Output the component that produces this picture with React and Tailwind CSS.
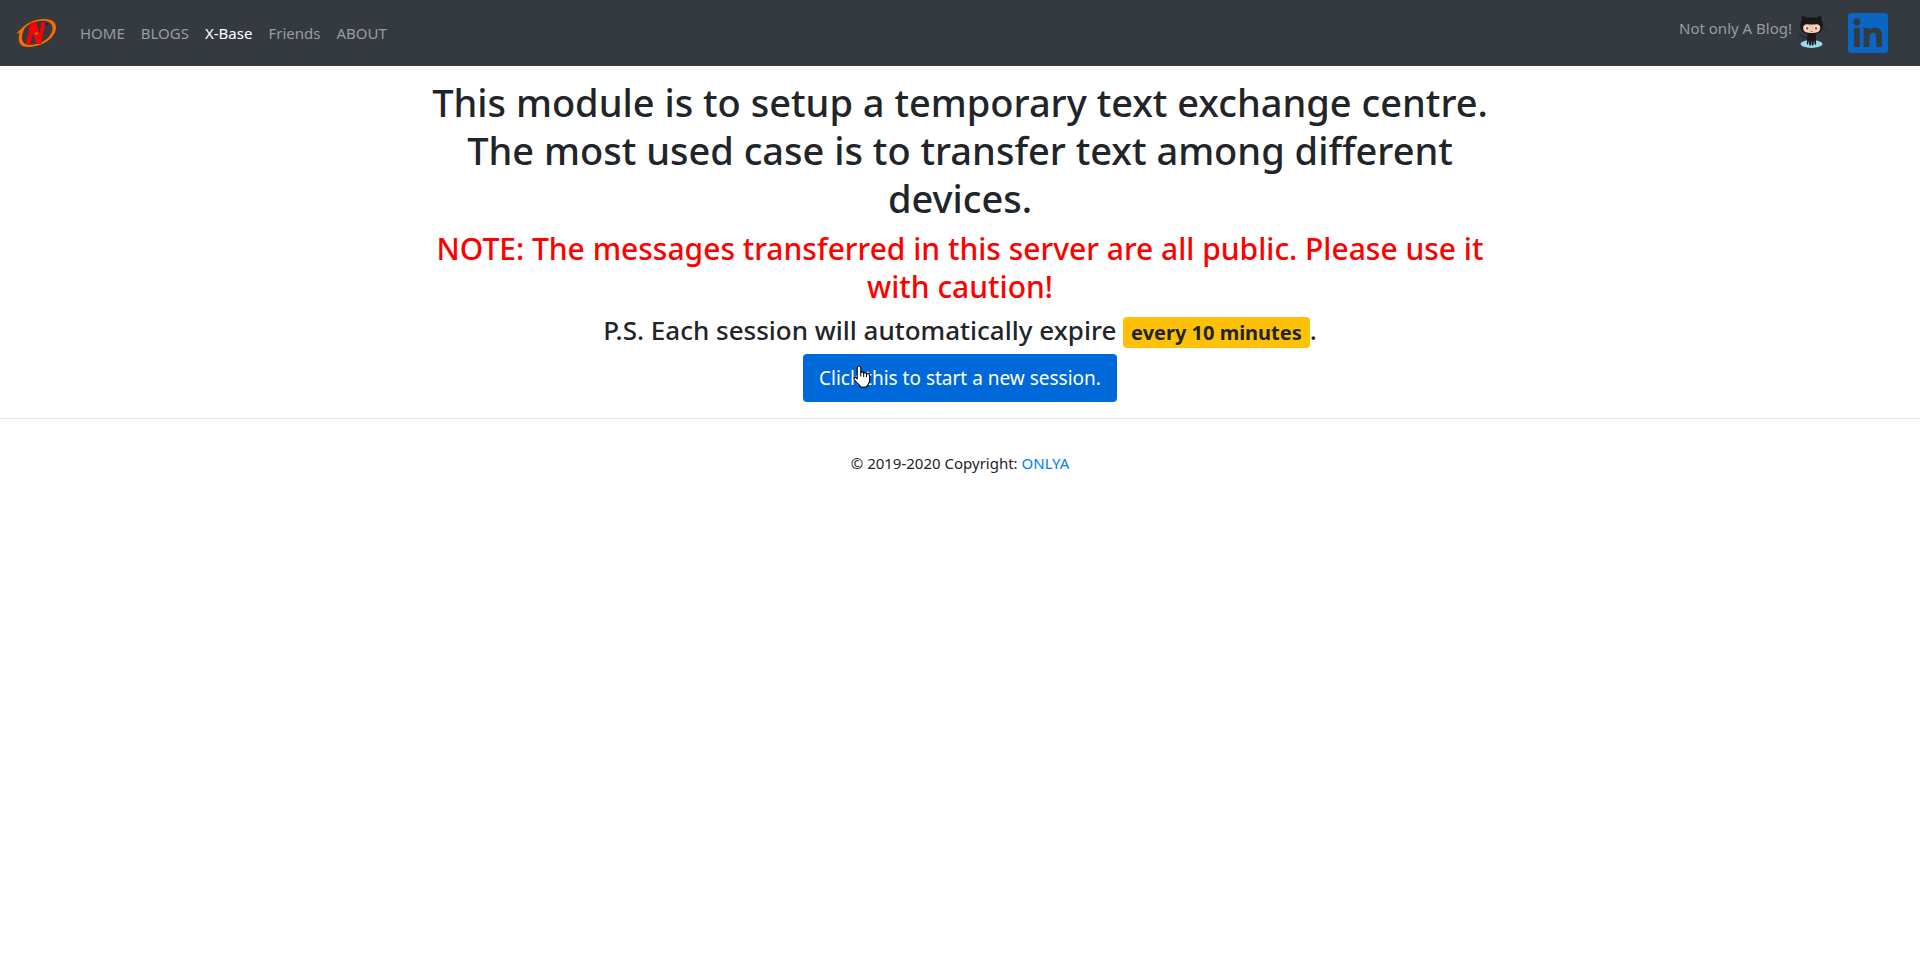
const NAV = [
  { label: "HOME" },
  { label: "BLOGS" },
  { label: "X-Base", active: true },
  { label: "Friends" },
  { label: "ABOUT" },
];

function BrandLogo() {
  return (
    <svg viewBox="0 0 40 40" className="block size-10" aria-hidden="true">
      <path
        fillRule="evenodd"
        fill="#ff6a00"
        d="M0.300 20.500 C3 17.500 5 16.500 7 14 C13 8.500 21 6 29 6 C36 6 40 9.500 40 14.500 C40 21 34 28 25 31.500 C19 33.800 12 34.500 8 33.500 C2.500 32 2 26 3.500 20 Z M7.200 18.500 C5.500 23 5.500 28 8.500 30.500 C12 33 20 31.800 26 29 C33 25.500 37 19.500 36.500 14.500 C36 10 32 7.600 26.500 7.800 C19.500 8 12 11 8.500 15.500 Z"
      />
      <path fill="#ff0000" d="M14.500 9.500 H20 L23.500 20 L25.500 9.500 H29.500 L25 31 H20.500 L17 20 L14.500 31 H10 Z" />
      <circle cx="20.500" cy="20.500" r="1.600" fill="#7a8a00" />
      <circle cx="30.500" cy="11" r="1" fill="#0000e0" />
    </svg>
  );
}

function Octocat() {
  return (
    <svg viewBox="0 0 32 34" className="block h-[34px] w-8" aria-hidden="true">
      <ellipse cx="13.500" cy="29" rx="11" ry="3.900" fill="#9bd8f5" />
      <path d="M0.800 19.500 C3 19.300 4 20.500 5 22 C6 23 8 23 9.500 22.500" fill="none" stroke="#1d2a33" strokeWidth="1.300" />
      <path d="M9.500 18 H17.500 L18.200 28.500 C18.200 30 16.800 30 16.500 29 L16 25 L15.500 30 C15 31 14 31 13.700 30 L13.500 25 L13 30 C12.500 31 11.500 31 11.300 30 L11 25 L10.300 29 C10 30 8.800 30 8.900 28.500 Z" fill="#1b1817" />
      <path d="M4 1 C6 0.500 8.500 2 9.500 2.700 C12 2.100 15.500 2.100 18 2.700 C19.500 1.700 21.500 0.700 23.200 1 C24 3 23.800 4.800 23.500 5.500 C25 7.500 25.200 10 24.600 13 C23.500 18 19 19.300 13.700 19.300 C8 19.300 3.800 18 2.700 13 C2 10 2.400 7.500 3.800 5.500 C3.400 4 3.400 2.500 4 1 Z" fill="#1b1817" />
      <path d="M8 9.300 C10 8.900 12 9.600 13.700 9.600 C15.500 9.600 17.500 8.900 19.500 9.300 C22 9.800 22.700 12 22.200 14 C21.500 17.200 18.500 18 13.700 18 C9 18 5.800 17.200 5.200 14 C4.800 12 5.500 9.800 8 9.300 Z" fill="#f4cbb2" />
      <ellipse cx="9" cy="13" rx="1.900" ry="2.500" fill="#fff" />
      <ellipse cx="18.300" cy="13" rx="1.900" ry="2.500" fill="#fff" />
      <ellipse cx="9.200" cy="13.200" rx="1.200" ry="1.700" fill="#ad5c51" />
      <ellipse cx="18.100" cy="13.200" rx="1.200" ry="1.700" fill="#ad5c51" />
      <path d="M12.700 16.500 H14.700" stroke="#ad5c51" strokeWidth="0.800" />
      <path d="M25 14 L31.500 15.500 M25 15 L30 17" stroke="#20272d" strokeWidth="0.500" opacity="0.500" />
    </svg>
  );
}

function LinkedIn() {
  return (
    <svg viewBox="0 0 24 24" className="block size-10" aria-hidden="true">
      <path
        fill="#0a66c2"
        d="M20.447 20.452h-3.554v-5.569c0-1.328-.027-3.037-1.852-3.037-1.853 0-2.136 1.445-2.136 2.939v5.667H9.351V9h3.414v1.561h.046c.477-.9 1.637-1.850 3.370-1.850 3.601 0 4.267 2.370 4.267 5.455v6.286zM5.337 7.433a2.062 2.062 0 0 1-2.063-2.065 2.064 2.064 0 1 1 2.063 2.065zm1.782 13.019H3.555V9h3.564v11.452zM22.225 0H1.771C.792 0 0 .774 0 1.729v20.542C0 23.227.792 24 1.771 24h20.451C23.200 24 24 23.227 24 22.271V1.729C24 .774 23.200 0 22.222 0h.003z"
      />
    </svg>
  );
}

function HandCursor() {
  return (
    <svg viewBox="0 0 18 24" className="pointer-events-none absolute top-[11px] left-[50px] h-6 w-[18px]" aria-hidden="true">
      <path
        d="M6 1 C7.200 1 7.800 1.800 7.800 3 V7.600 C8.200 6.500 10.500 6.500 10.700 8.200 C11.300 7.300 13.300 7.500 13.500 9 C14.500 8.200 16.600 8.700 16.600 10.700 V15 C16.600 18 15 19.500 14.500 20.500 C13.500 23 7.500 23 6.500 20.500 C5.500 18.500 2.500 17 1.200 14.500 C0.300 12.500 2.500 11.800 3.600 13.200 L4.200 14 V3 C4.200 1.800 4.800 1 6 1 Z"
        fill="#fff"
        stroke="#000"
        strokeWidth="1.100"
        strokeLinejoin="round"
      />
      <path d="M7.800 7 V11.500 M10.700 8 V12 M13.500 9 V12" stroke="#000" strokeWidth="1" />
    </svg>
  );
}

export default function App() {
  return (
    <div className="bg-white font-['Noto_Sans','Open_Sans',sans-serif] text-[15px] leading-6 text-[#212529]">
      <nav className="flex items-center bg-[#343a40] px-4 py-[13px]">
        <a href="#" aria-label="Onlya" className="mr-4">
          <BrandLogo />
        </a>
        <ul className="flex flex-1">
          {NAV.map((item) => (
            <li key={item.label}>
              <a href="#" className={item.active ? "block px-2 text-white" : "block px-2 text-[#999c9f]"}>
                {item.label}
              </a>
            </li>
          ))}
        </ul>
        <div className="flex items-center pr-4">
          <span className="pb-[10px] text-[#999c9f]">Not only A Blog!</span>
          <a href="#" aria-label="GitHub" className="mr-[18px] mb-[2px] ml-[6px]">
            <Octocat />
          </a>
          <a href="#" aria-label="LinkedIn">
            <LinkedIn />
          </a>
        </div>
      </nav>

      <main className="mx-auto flex max-w-[1140px] flex-col items-center gap-2 px-4 pt-3 pb-4 text-center">
        <h1 className="text-[38px] leading-[48px] font-medium">
          This module is to setup a temporary text exchange centre. The most used case is to transfer text among
          different devices.
        </h1>
        <h2 className="text-[30px] leading-[38px] font-medium text-[#ff0000]">
          NOTE: The messages transferred in this server are all public. Please use it with caution!
        </h2>
        <h3 className="text-[26px] leading-8 font-medium">
          P.S. Each session will automatically expire{" "}
          <span className="rounded bg-[#ffc107] px-2 py-[2px] text-[20px] leading-none font-bold">every 10 minutes</span>.
        </h3>
        <button
          type="button"
          className="relative h-12 cursor-pointer rounded bg-[#0069d9] px-4 text-[19px] leading-[30px] text-white"
        >
          Click this to start a new session.
          <HandCursor />
        </button>
      </main>

      <footer className="border-t border-[#e5e5e5] py-8 text-center">
        <p>
          © 2019-2020 Copyright:{" "}
          <a href="#" className="text-[#007bff]">
            ONLYA
          </a>
        </p>
      </footer>
    </div>
  );
}
